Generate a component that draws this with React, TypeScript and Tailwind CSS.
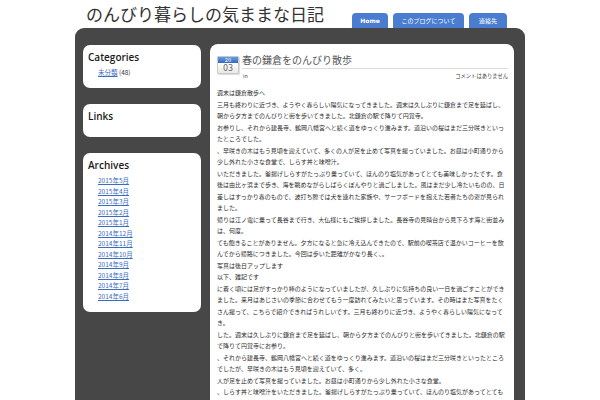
import React from 'react';

// 本文（元ページの行の長さに合わせて行ごとに切り出す）
const source =
  '三月も終わりに近づき、ようやく春らしい陽気になってきました。週末は久しぶりに鎌倉まで足を延ばし、朝から夕方までのんびりと街を歩いてきました。北鎌倉の駅で降りて円覚寺にお参りし、それから建長寺、鶴岡八幡宮へと続く道をゆっくり進みます。道沿いの桜はまだ三分咲きといったところでしたが、早咲きの木はもう見頃を迎えていて、多くの人が足を止めて写真を撮っていました。お昼は小町通りから少し外れた小さな食堂で、しらす丼と味噌汁をいただきました。釜揚げしらすがたっぷり乗っていて、ほんのり塩気があってとても美味しかったです。食後は由比ヶ浜まで歩き、海を眺めながらしばらくぼんやりと過ごしました。風はまだ少し冷たいものの、日差しはすっかり春のもので、波打ち際では犬を連れた家族や、サーフボードを抱えた若者たちの姿が見られました。帰りは江ノ電に乗って長谷まで行き、大仏様にもご挨拶しました。長谷寺の見晴台から見下ろす海と街並みは、何度来ても飽きることがありません。夕方になると急に冷え込んできたので、駅前の喫茶店で温かいコーヒーを飲んでから帰路につきました。今回は歩いた距離がかなり長く、家に着く頃には足がすっかり棒のようになっていましたが、久しぶりに気持ちの良い一日を過ごすことができました。来月はあじさいの季節に合わせてもう一度訪れてみたいと思っています。その時はまた写真をたくさん撮って、こちらで紹介できればうれしいです。';

const PER_LINE = 48;

// [full lines, chars on the last line] or a fixed short line
const plan: ([number, number] | string)[] = [
  '週末は鎌倉散歩へ',
  [1, 35],
  [1, 8],
  [1, 21],
  [3, 4],
  [1, 5],
  [1, 29],
  '写真は後日アップします',
  '以下、雑記です',
  [3, 2],
  [1, 12],
  [1, 25],
  [0, 38],
  [3, 20],
];

function buildLines(): string[][] {
  let pos = 0;
  const take = (n: number) => {
    let s = '';
    while (s.length < n) {
      s += source[pos % source.length];
      pos++;
    }
    return s;
  };
  return plan.map((item) => {
    if (typeof item === 'string') return [item];
    const [full, last] = item;
    const lines: string[] = [];
    for (let i = 0; i < full; i++) lines.push(take(PER_LINE));
    const tail = take(last);
    lines.push(tail.slice(0, last - 1) + '。');
    return lines;
  });
}

const archives = [
  '2015年5月',
  '2015年4月',
  '2015年3月',
  '2015年2月',
  '2015年1月',
  '2014年12月',
  '2014年11月',
  '2014年10月',
  '2014年9月',
  '2014年8月',
  '2014年7月',
  '2014年6月',
];

const Widget = ({ title, children, className = '' }: { title: string; children?: React.ReactNode; className?: string }) => (
  <div className={`bg-white rounded-[7px] px-[5px] pt-[6px] ${className}`}>
    <h3 className="font-['Open_Sans',sans-serif] text-[10px] leading-[12px] font-semibold text-[#1a1a1a]">{title}</h3>
    {children}
  </div>
);

const App = () => {
  const paragraphs = buildLines();

  return (
    <div className="w-[600px] h-[400px] overflow-hidden bg-white font-['Noto_Sans_CJK_JP','Noto_Sans',sans-serif]">
      <div className="mx-auto w-[450px]">
        {/* header */}
        <div className="flex h-[28px] justify-between">
          <h1 className="pl-[11px] pt-[3px] text-[17px] leading-[22px] text-[#333]">のんびり暮らしの気ままな日記</h1>
          <nav className="flex items-end gap-[5px] pr-[18px]">
            <a className="flex h-[15px] w-[36px] items-center justify-center rounded-t-[4px] bg-[#4a7dd0] font-['DejaVu_Sans',sans-serif] text-[6px] font-bold text-white">
              Home
            </a>
            <a className="flex h-[15px] w-[71px] items-center justify-center rounded-t-[4px] bg-[#4a7dd0] text-[6px] text-white">
              このブログについて
            </a>
            <a className="flex h-[15px] w-[38px] items-center justify-center rounded-t-[4px] bg-[#4a7dd0] text-[6px] text-white">
              連絡先
            </a>
          </nav>
        </div>

        {/* dark frame */}
        <div className="flex h-[372px] gap-[9px] rounded-t-[9px] bg-[#474747] pl-[8px] pr-[11px] pt-[16px]">
          {/* sidebar */}
          <aside className="mt-[1px] flex w-[118px] flex-col gap-[16px]">
            <Widget title="Categories" className="h-[43px]">
              <div className="mt-[4px] pl-[10px] text-[6.5px] leading-[10px] text-[#333]">
                <a className="text-[#3a6cc4] underline">未分類</a> (48)
              </div>
            </Widget>
            <Widget title="Links" className="h-[33px]" />
            <Widget title="Archives" className="h-[159px]">
              <ul className="mt-[4px] pl-[10px]">
                {archives.map((a) => (
                  <li key={a} className="text-[6.5px] leading-[10.5px]">
                    <a className="text-[#3a6cc4] underline">{a}</a>
                  </li>
                ))}
              </ul>
            </Widget>
          </aside>

          {/* main */}
          <main className="flex-1 overflow-hidden rounded-t-[8px] bg-white pl-[7px] pr-[6px] pt-[10px]">
            <div className="flex gap-[3px]">
              <div className="mt-[2px] h-[18px] w-[22px] shrink-0 overflow-hidden rounded-[1px] border border-[#c9c9c9] shadow-[1px_1px_1px_rgba(0,0,0,0.15)]">
                <div className="h-[6px] bg-gradient-to-b from-[#6b9be0] to-[#336bc0] text-center font-['DejaVu_Sans',sans-serif] text-[5px] leading-[6px] text-white">
                  20
                </div>
                <div className="h-[11px] bg-gradient-to-b from-[#ffffff] to-[#e6e6e6] text-center font-['DejaVu_Sans',sans-serif] text-[8px] leading-[11px] text-[#666]">
                  03
                </div>
              </div>
              <div className="flex-1">
                <h2 className="border-b border-[#dcdcdc] pb-[2px] text-[10px] leading-[12px] text-[#555]">春の鎌倉をのんびり散歩</h2>
                <div className="mt-[3px] flex justify-between text-[5.3px] leading-[8px] text-[#444]">
                  <span className="pl-[1px] font-['DejaVu_Sans',sans-serif]">in</span>
                  <span>コメントはありません</span>
                </div>
              </div>
            </div>

            <div className="mt-[7px] w-[290px] text-[6px] leading-[11.5px] text-[#2b2b2b]">
              {paragraphs.map((lines, i) => (
                <p key={i}>
                  {lines.map((l, j) => (
                    <span key={j} className="block whitespace-nowrap">
                      {l}
                    </span>
                  ))}
                </p>
              ))}
            </div>
          </main>
        </div>
      </div>
    </div>
  );
};

export default App;
